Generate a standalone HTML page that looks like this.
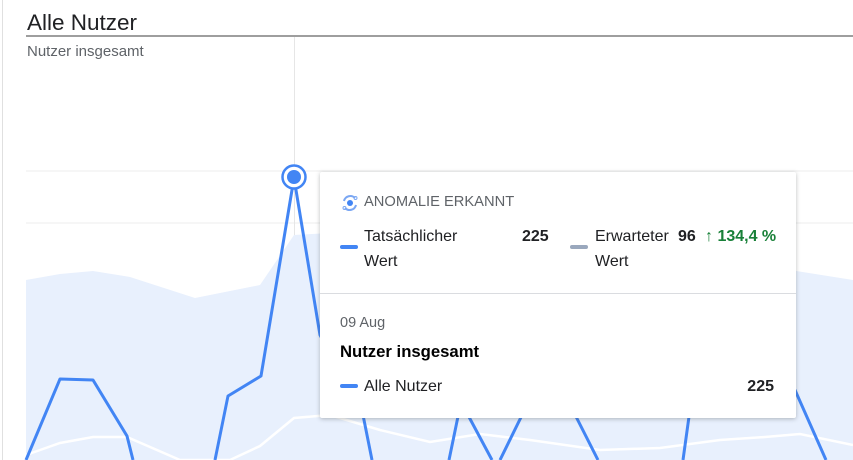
<!DOCTYPE html>
<html><head><meta charset="utf-8"><style>
body{margin:0;width:853px;height:460px;overflow:hidden;background:#fff;font-family:"Liberation Sans",Arial,sans-serif;position:relative}
.abs{position:absolute;white-space:nowrap}
.tt{position:absolute;left:320px;top:172px;width:476px;height:246px;background:#fff;box-shadow:0 1px 4px rgba(60,64,67,.35);border-radius:2px}
.dash{position:absolute;width:18px;height:4px;border-radius:2px}
.t{font-size:16px;color:#202124}
</style></head><body>
<div class="abs" style="left:2px;top:0;width:1px;height:460px;background:#e0e0e0"></div>
<div class="abs" style="left:27px;top:10px;font-size:22.5px;color:#202124">Alle Nutzer</div>
<div class="abs" style="left:26px;top:35px;width:827px;height:2px;background:#9e9e9e"></div>
<div class="abs" style="left:27px;top:43px;font-size:15px;color:#5f6368">Nutzer insgesamt</div>
<svg class="abs" style="left:0;top:0" width="853" height="460">
<line x1="26" y1="171" x2="853" y2="171" stroke="#ececec"/>
<line x1="26" y1="223" x2="853" y2="223" stroke="#ececec"/>
<line x1="26" y1="411" x2="853" y2="411" stroke="#e6e6e6"/>
<line x1="294.5" y1="37" x2="294.5" y2="460" stroke="#e6e6e6"/>
<path d="M26 280 L60 274 L93 271 L130 277 L195 298 L260 285 L294 235 L330 233 L360 240 L420 250 L480 255 L560 262 L640 266 L720 268 L790 270 L853 280 L853 460 L26 460Z" fill="#e8f0fd"/>
<polyline points="26,455 60,443 93,437 127,437 180,460 230,460 260,446 294,418 330,415 380,430 430,442 480,434 530,440 600,450 660,448 720,440 765,437 800,434 853,445" fill="none" stroke="#fff" stroke-width="2.5"/>
<polyline points="26,460 60,379 93,380 127,436 133,460" fill="none" stroke="#4285f4" stroke-width="3" stroke-linejoin="round"/>
<polyline points="215,460 228,396 261,376 294,178 320,335 362,410 372,460" fill="none" stroke="#4285f4" stroke-width="3" stroke-linejoin="round"/>
<polyline points="449,460 461,402 492,460" fill="none" stroke="#4285f4" stroke-width="3"/>
<polyline points="500,460 527,405 560,385 598,460" fill="none" stroke="#4285f4" stroke-width="3"/>
<polyline points="683,460 692,395 730,413 765,362 795,390 826,460" fill="none" stroke="#4285f4" stroke-width="3"/>
<circle cx="294" cy="177" r="11.5" fill="#fff" stroke="#4285f4" stroke-width="2.5"/>
<circle cx="294" cy="177" r="7" fill="#4285f4"/>
</svg>
<div class="tt">
<svg class="abs" style="left:21px;top:22px" width="18" height="18" viewBox="0 0 18 18"><path d="M3 7 A6.5 6.5 0 0 1 14 4" fill="none" stroke="#7ba7f3" stroke-width="2"/><path d="M15 11 A6.5 6.5 0 0 1 4 14" fill="none" stroke="#7ba7f3" stroke-width="2"/><circle cx="9" cy="9" r="3" fill="#4285f4"/><circle cx="14.5" cy="4" r="1.5" fill="none" stroke="#7ba7f3"/><circle cx="3.5" cy="14" r="1.5" fill="none" stroke="#7ba7f3"/></svg>
<div class="abs" style="left:44px;top:22px;font-size:14.7px;color:#5f6368">ANOMALIE ERKANNT</div>
<div class="dash" style="left:20px;top:73px;background:#4285f4"></div>
<div class="abs t" style="left:44px;top:52px;line-height:25px">Tatsächlicher<br>Wert</div>
<div class="abs t" style="left:202px;top:52px;line-height:25px;font-weight:bold">225</div>
<div class="dash" style="left:250px;top:73px;background:#9aa8bd"></div>
<div class="abs t" style="left:275px;top:52px;line-height:25px">Erwarteter<br>Wert</div>
<div class="abs t" style="left:358px;top:52px;line-height:25px;font-weight:bold">96</div>
<div class="abs t" style="left:385px;top:52px;line-height:25px;font-weight:bold;color:#188038">↑ 134,4 %</div>
<div class="abs" style="left:0;top:121px;width:476px;height:1px;background:#dadce0"></div>
<div class="abs" style="left:20px;top:143px;font-size:14.5px;color:#5f6368">09 Aug</div>
<div class="abs" style="left:20px;top:170px;font-size:16.7px;font-weight:bold;color:#000">Nutzer insgesamt</div>
<div class="dash" style="left:20px;top:212px;background:#4285f4"></div>
<div class="abs t" style="left:44px;top:206px">Alle Nutzer</div>
<div class="abs t" style="right:22px;top:206px;font-weight:bold">225</div>
</div>
</body></html>
